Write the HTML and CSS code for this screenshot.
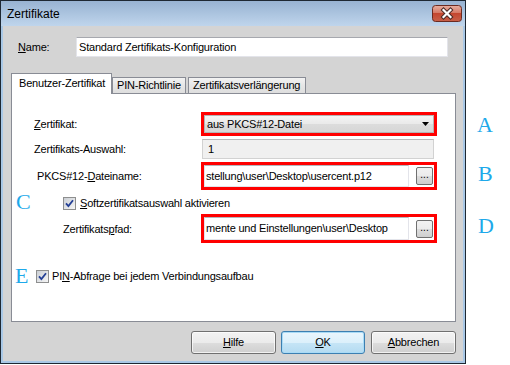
FILE: index.html
```html
<!DOCTYPE html>
<html>
<head>
<meta charset="utf-8">
<title>Zertifikate</title>
<link rel="stylesheet" href="styles.css">
</head>
<body>
<div class="stage">
  <div class="window">
    <div class="titlebar">
      <span class="title">Zertifikate</span>
      <span class="close">
        <svg width="30" height="17" viewBox="0 0 30 17">
          <defs>
            <linearGradient id="cg" x1="0" y1="0" x2="0" y2="1">
              <stop offset="0" stop-color="#e8b0a2"/>
              <stop offset="0.45" stop-color="#d67a66"/>
              <stop offset="0.5" stop-color="#c4462f"/>
              <stop offset="1" stop-color="#c8614a"/>
            </linearGradient>
          </defs>
          <rect x="0.5" y="0.5" width="29" height="16" rx="3" fill="url(#cg)" stroke="#6b2a20"/>
          <path d="M11.5 5 L18.5 12 M18.5 5 L11.5 12" stroke="#4a2a26" stroke-width="4.2" stroke-linecap="square"/>
          <path d="M11.5 5 L18.5 12 M18.5 5 L11.5 12" stroke="#ffffff" stroke-width="2.2" stroke-linecap="square"/>
        </svg>
      </span>
    </div>
    <div class="client">
      <div class="name-row">
        <span class="name-label"><u>N</u>ame:</span>
        <div class="name-box">Standard Zertifikats-Konfiguration</div>
      </div>
      <div class="tabs">
        <div class="tab tab-active">Benutzer-Zertifikat</div>
        <div class="tab tab-pin">PIN-Richtlinie</div>
        <div class="tab tab-ext">Zertifikatsverlängerung</div>
      </div>
      <div class="panel">
        <div class="row r1">
          <span class="lbl"><u>Z</u>ertifikat:</span>
          <div class="hl">
            <div class="combo">
              <span class="combo-text">aus PKCS#12-Datei</span>
              <svg class="arrow" width="7" height="4" viewBox="0 0 7 4"><path d="M0 0h7l-3.5 4z" fill="#000"/></svg>
            </div>
          </div>
        </div>
        <div class="row r2">
          <span class="lbl">Zertifikats-Auswahl:</span>
          <div class="readonly">1</div>
        </div>
        <div class="row r3">
          <span class="lbl lbl-pkcs">PKCS#12-<u>D</u>ateiname:</span>
          <div class="hl">
            <div class="input">stellung\user\Desktop\usercent.p12</div>
            <div class="browse">...</div>
          </div>
        </div>
        <div class="row r4">
          <span class="cb cb-soft"><svg width="9" height="9" viewBox="0 0 9 9"><path d="M1 4.3 L3.4 7 L8 1.2" fill="none" stroke="#233f95" stroke-width="1.8"/></svg></span>
          <span class="cb-text"><u>S</u>oftzertifikatsauswahl aktivieren</span>
        </div>
        <div class="row r5">
          <span class="lbl lbl-pfad">Zertifikats<u>p</u>fad:</span>
          <div class="hl">
            <div class="input">mente und Einstellungen\user\Desktop</div>
            <div class="browse">...</div>
          </div>
        </div>
        <div class="row r6">
          <span class="cb cb-pin"><svg width="9" height="9" viewBox="0 0 9 9"><path d="M1 4.3 L3.4 7 L8 1.2" fill="none" stroke="#233f95" stroke-width="1.8"/></svg></span>
          <span class="cb-text cb-text-pin">PI<u>N</u>-Abfrage bei jedem Verbindungsaufbau</span>
        </div>
      </div>
      <div class="buttons">
        <div class="btn btn-help"><u>H</u>ilfe</div>
        <div class="btn btn-ok"><u>O</u>K</div>
        <div class="btn btn-cancel"><u>A</u>bbrechen</div>
      </div>
    </div>
  </div>
  <span class="mark mark-a">A</span>
  <span class="mark mark-b">B</span>
  <span class="mark mark-c">C</span>
  <span class="mark mark-d">D</span>
  <span class="mark mark-e">E</span>
</div>
</body>
</html>
```
FILE: styles.css
```css
* { box-sizing: border-box; }
html, body { margin: 0; padding: 0; background: #fff; }
body {
  font-family: "Liberation Sans", Arial, sans-serif;
  font-size: 11px;
  letter-spacing: -0.2px;
  color: #000;
}
u { text-decoration-thickness: 1px; text-underline-offset: 1px; }

.stage { position: relative; width: 510px; height: 365px; overflow: hidden; background: #fff; }

.window {
  width: 466px;
  height: 364px;
  border: 1px solid #1e2833;
  background: #a9c8e6;
  display: flex;
  flex-direction: column;
}
.titlebar {
  height: 25px;
  flex: none;
  display: flex;
  align-items: flex-start;
  background: linear-gradient(#98b3d2, #bfd5ec);
}
.title {
  flex: 1;
  font-size: 12px;
  letter-spacing: 0;
  line-height: 15px;
  margin: 6px 0 0 6px;
}
.close { width: 30px; height: 17px; margin: 4px 3px 0 0; display: block; }
.close svg { display: block; }

.client {
  flex: 1;
  margin: 0 2px 2px;
  background: #d4d4d4;
  display: flex;
  flex-direction: column;
  padding-top: 11px;
}

.name-row { display: flex; align-items: center; height: 20px; }
.name-label { width: 58px; margin-left: 15px; }
.name-box {
  width: 372px;
  height: 20px;
  background: #fff;
  border: 1px solid #e3e4ea;
  border-top-color: #a6a8ae;
  padding-left: 2px;
  line-height: 18px;
}

.tabs {
  display: flex;
  align-items: flex-end;
  height: 20px;
  margin: 16px 0 0 8px;
  position: relative;
  z-index: 1;
}
.tab {
  height: 16px;
  border: 1px solid #898c95;
  border-bottom: none;
  background: linear-gradient(#f3f3f3, #e6e6e6 50%, #dedede);
  line-height: 15px;
  padding-left: 4px;
  white-space: nowrap;
}
.tab-active {
  height: 21px;
  width: 101px;
  margin-bottom: -1px;
  background: #fff;
  line-height: 19px;
  padding-left: 7px;
}
.tab-pin { width: 74px; }
.tab-ext { width: 118px; margin-left: 2px; }

.panel {
  height: 229px;
  margin: 0 7px 0 8px;
  border: 1px solid #898c95;
  background: #fff;
  padding-top: 18px;
}
.row { display: flex; align-items: center; }
.lbl { width: 189px; padding-left: 22px; flex: none; white-space: nowrap; }
.lbl-pkcs { padding-left: 25px; }
.lbl-pfad { padding-left: 51px; }

.r1 { height: 24px; margin-bottom: 3px; }
.r2 { height: 20px; margin-bottom: 3px; }
.r3 { height: 28px; margin-bottom: 5px; }
.r4 { height: 16px; margin-bottom: 3px; }
.r5 { height: 29px; margin-bottom: 25px; }
.r6 { height: 16px; }

.hl {
  width: 236px;
  height: 100%;
  border: 3px solid #f00;
  display: flex;
  align-items: center;
}
.combo {
  width: 230px;
  height: 18px;
  border: 1px solid #b4b4b4;
  background: linear-gradient(#f4f4f4, #e9e9e9 50%, #dcdcdc 50%, #d6d6d6);
  display: flex;
  align-items: center;
  padding-left: 2px;
}
.combo-text { flex: 1; }
.arrow { margin-right: 4px; display: block; }

.readonly {
  margin-left: 1px;
  width: 232px;
  height: 20px;
  border: 1px solid #d2d2d2;
  border-top-color: #b8b8b8;
  background: #f0f0f0;
  padding-left: 5px;
  line-height: 18px;
}

.input {
  width: 205px;
  height: 100%;
  border: 1px solid #e3e4ea;
  border-top-color: #b5b7bc;
  background: #fff;
  padding-left: 1px;
  line-height: 20px;
  white-space: nowrap;
  overflow: hidden;
}
.browse {
  width: 17px;
  height: 18px;
  margin-left: 7px;
  border: 1px solid #707070;
  border-radius: 2px;
  background: linear-gradient(#f2f2f2, #ebebeb 50%, #dddddd 50%, #cfcfcf);
  text-align: center;
  line-height: 14px;
  letter-spacing: 0;
  font-size: 10px;
}

.cb {
  width: 13px;
  height: 13px;
  flex: none;
  border: 1px solid #8e8f8f;
  background: linear-gradient(135deg, #cbcfd5, #f6f6f6);
  display: flex;
  align-items: center;
  justify-content: center;
}
.cb svg { display: block; }
.cb-soft { margin-left: 51px; }
.cb-pin { margin-left: 24px; }
.cb-text { margin-left: 4px; white-space: nowrap; }
.cb-text-pin { margin-left: 3px; }

.buttons {
  display: flex;
  justify-content: flex-end;
  margin-top: 9px;
  padding-right: 7px;
}
.btn {
  height: 23px;
  width: 85px;
  border: 1px solid #707070;
  border-radius: 3px;
  background: linear-gradient(#f2f2f2, #ebebeb 50%, #dddddd 50%, #cfcfcf);
  box-shadow: inset 0 0 0 1px rgba(255,255,255,0.7);
  text-align: center;
  line-height: 21px;
}
.btn-help { margin-right: 5px; }
.btn-ok {
  width: 84px;
  margin-right: 6px;
  border-color: #3c7fb1;
  background: linear-gradient(#eaf6fd, #dcf0fb 50%, #c6e5f6 50%, #b4dbf1);
  box-shadow: inset 0 0 0 1px #a9dbf6;
}

.mark {
  position: absolute;
  font-family: "Liberation Serif", "Times New Roman", serif;
  font-size: 22px;
  line-height: 22px;
  letter-spacing: 0;
  color: #1ea9ea;
}
.mark-a { left: 477px; top: 114px; }
.mark-b { left: 478px; top: 163px; }
.mark-c { left: 16px; top: 191px; }
.mark-d { left: 478px; top: 215px; }
.mark-e { left: 15px; top: 265px; }
```
